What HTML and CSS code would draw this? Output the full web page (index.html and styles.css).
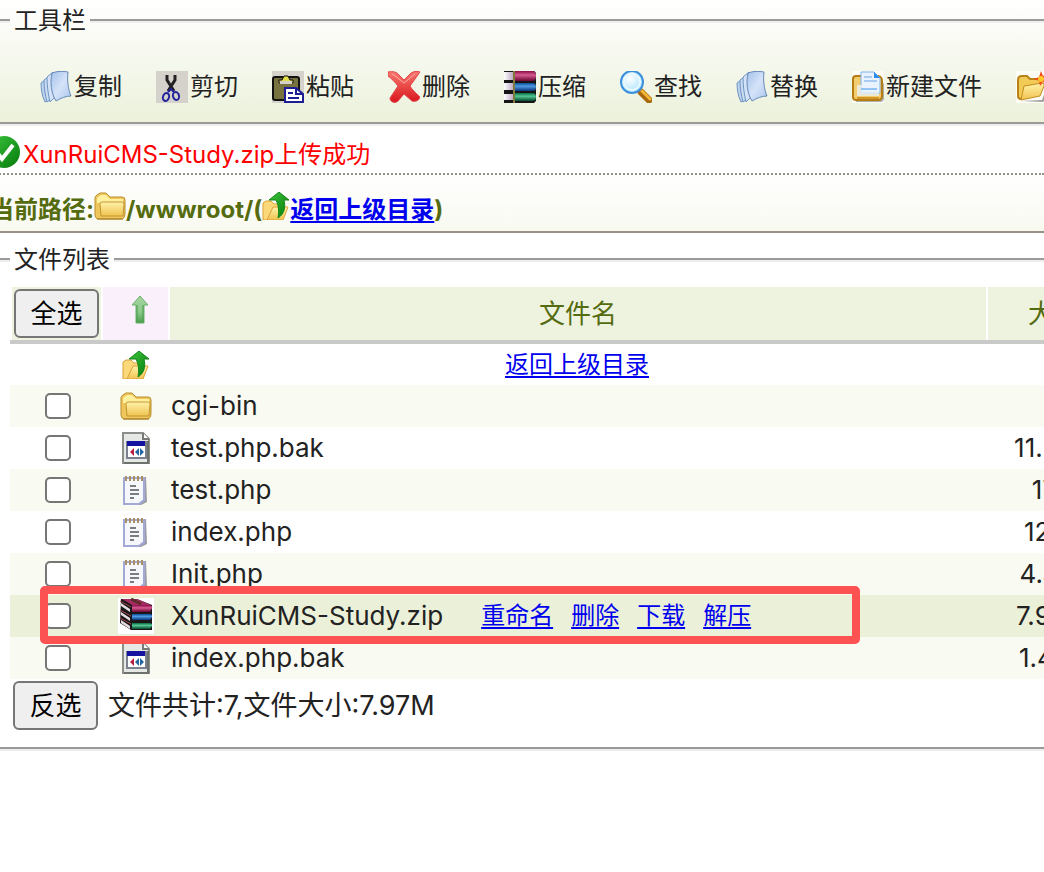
FILE: index.html
```
<!DOCTYPE html>
<html lang="zh-CN">
<head>
    <meta charset="utf-8">
    <title>文件管理</title>
    <link rel="stylesheet" href="styles.css">
</head>
<body>
    <svg class="defs" width="0" height="0" aria-hidden="true">
        <defs>
            <linearGradient id="blue" x1="0" y1="0" x2="1" y2="1">
                <stop offset="0" stop-color="#a4c2ea"/>
                <stop offset=".5" stop-color="#d5e3f9"/>
                <stop offset="1" stop-color="#a9c4ee"/>
            </linearGradient>
            <linearGradient id="gold" x1="0" y1="0" x2="0" y2="1">
                <stop offset="0" stop-color="#fff3a8"/>
                <stop offset="1" stop-color="#f0c351"/>
            </linearGradient>
            <linearGradient id="red" x1="0" y1="0" x2="0" y2="1">
                <stop offset="0" stop-color="#f87a70"/>
                <stop offset="1" stop-color="#d9151c"/>
            </linearGradient>
            <linearGradient id="green" x1="0" y1="0" x2="1" y2="1">
                <stop offset="0" stop-color="#3cc53c"/>
                <stop offset="1" stop-color="#057a0c"/>
            </linearGradient>
            <linearGradient id="pale" x1="0" y1="0" x2="0" y2="1">
                <stop offset="0" stop-color="#a4d5a0"/>
                <stop offset=".6" stop-color="#8cc98a"/>
                <stop offset="1" stop-color="#4c9f4f"/>
            </linearGradient>
            <linearGradient id="page" x1="0" y1="0" x2="1" y2="0">
                <stop offset="0" stop-color="#fff"/>
                <stop offset="1" stop-color="#bda9c4"/>
            </linearGradient>
            <linearGradient id="bookRed" x1="0" y1="0" x2="0" y2="1">
                <stop offset="0" stop-color="#8a0a48"/>
                <stop offset=".4" stop-color="#d65a90"/>
                <stop offset="1" stop-color="#6c0332"/>
            </linearGradient>
            <linearGradient id="bookBlue" x1="0" y1="0" x2="0" y2="1">
                <stop offset="0" stop-color="#0c4c98"/>
                <stop offset=".4" stop-color="#4f9be2"/>
                <stop offset="1" stop-color="#08347a"/>
            </linearGradient>
            <linearGradient id="bookGreen" x1="0" y1="0" x2="0" y2="1">
                <stop offset="0" stop-color="#046b40"/>
                <stop offset=".4" stop-color="#55c795"/>
                <stop offset="1" stop-color="#034a2c"/>
            </linearGradient>
            <radialGradient id="lens" cx=".4" cy=".35" r=".7">
                <stop offset="0" stop-color="#fff"/>
                <stop offset="1" stop-color="#a5e1fb"/>
            </radialGradient>
        </defs>

        <symbol id="i-copy" viewBox="0 0 32 32">
            <path d="M1 12l7-5 2 22-5 2C2 25 1 18 1 12z" fill="#bdd2ee" stroke="#6f95c0"/>
            <path d="M4 9l7-5 1 23-5 4C5 24 4 16 4 9z" fill="#c9dbf3" stroke="#6f95c0"/>
            <path d="M7 6l6-5 2 25-5 5C8 23 7 14 7 6z" fill="#d3e2f6" stroke="#6f95c0"/>
            <path d="M12 2c5-2 11-2 16-1-1 8 0 17 3 24-5 0-10 2-15 5C11 22 10 11 12 2z" fill="url(#blue)" stroke="#6689b6"/>
        </symbol>

        <symbol id="i-cut" viewBox="0 0 32 32">
            <path d="M0 0h32v32H0z" fill="#d5d2cb"/>
            <path d="M11 4v5l7 11M19 4v5l-7 11" fill="none" stroke="#222" stroke-width="3"/>
            <ellipse cx="10" cy="26" rx="3" ry="4" transform="rotate(20 10 26)" fill="none" stroke="#22229a" stroke-width="2"/>
            <ellipse cx="20" cy="25" rx="3" ry="4" transform="rotate(-15 20 25)" fill="none" stroke="#22229a" stroke-width="2"/>
            <path d="M12 21l3-3 3 3" fill="none" stroke="#22229a" stroke-width="2"/>
        </symbol>

        <symbol id="i-paste" viewBox="0 0 32 32">
            <path d="M0 0h32v32H0z" fill="#d5d2cb"/>
            <rect x="1" y="6" width="26" height="23" rx="2" fill="#77723e" stroke="#111" stroke-width="2"/>
            <path d="M7 12V9h3l2-4h4l2 4h3v3z" fill="#e5df4d" stroke="#111"/>
            <path d="M8 10h12v3H8z" fill="#d5d2cb"/>
            <path d="M13 17h11l7 6v8H13z" fill="#fff" stroke="#1d1d96" stroke-width="2"/>
            <path d="M24 17v6h6M16 22h5M16 27h11" fill="none" stroke="#1d1d96" stroke-width="2"/>
        </symbol>

        <symbol id="i-delete" viewBox="0 0 32 32">
            <path d="M0 1c5-1 9 0 11 3l5 5 7-7c3-2 7-2 9-1L22 15c2 4 6 7 10 11-1 4-5 5-8 4l-8-7-6 7c-3 3-8 1-8-3l8-12C7 11 4 8 0 5z" fill="url(#red)" stroke="#e0464a"/>
            <path d="M4 3c4 2 8 6 12 9L27 3" fill="none" stroke="#ffaca5"/>
        </symbol>

        <symbol id="i-rar" viewBox="0 0 32 32">
            <path d="M0 0h30l2 2v28l-2 2H0z" fill="#151515"/>
            <path d="M0 1h9v8H0zM0 12h9v7H0zM0 23h9v6H0z" fill="url(#page)"/>
            <path d="M11 0h18q3 0 3 5t-3 5H11z" fill="url(#bookRed)"/>
            <path d="M11 12h18q3 0 3 4t-3 4H11z" fill="url(#bookBlue)"/>
            <path d="M11 22h18q3 0 3 4t-3 4H11z" fill="url(#bookGreen)"/>
            <path d="M10 0v32" stroke="#7d7a3c" stroke-width="2"/>
        </symbol>

        <symbol id="i-find" viewBox="0 0 32 32">
            <path d="M21 21l8 8" stroke="#a8680e" stroke-width="7" stroke-linecap="round"/>
            <path d="M22 20l8 8" stroke="#f3b73a" stroke-width="3" stroke-linecap="round"/>
            <circle cx="12" cy="11" r="11" fill="url(#lens)" stroke="#3d90dc" stroke-width="2"/>
            <circle cx="12" cy="11" r="8" fill="none" stroke="#e9f8ff" stroke-width="2"/>
        </symbol>

        <symbol id="i-newfile" viewBox="0 0 32 32">
            <path d="M0 0h32v32H0z" fill="#fdfcf6"/>
            <path d="M4 29h26V10l2 3v14q0 4-4 4H4z" fill="#777" opacity=".6"/>
            <path d="M1 8q0-3 3-3h22q4 1 4 5v15q0 4-4 4H4q-3 0-3-3z" fill="#f2cd70" stroke="#b57d12" stroke-width="2"/>
            <path d="M9 1h13l6 6v15H9z" fill="#e9f3ff" stroke="#7fb3ea"/>
            <path d="M22 1l6 6h-6z" fill="#2b8df0"/>
            <path d="M12 6h8M12 10h13" stroke="#a8cbf2" stroke-width="2"/>
            <path d="M5 14h22v11H5z" fill="#eaf3fa" opacity=".75"/>
            <path d="M9 18h16" stroke="#8fc4f3" stroke-width="2"/>
            <path d="M5 27h22" stroke="#d3962a" stroke-width="2"/>
        </symbol>

        <symbol id="i-newdir" viewBox="0 0 32 32">
            <path d="M0 0h32v32H0z" fill="#fdfcf6"/>
            <path d="M5 30l21-1 5-13v10l-4 5z" fill="#777" opacity=".7"/>
            <path d="M2 9q0-4 4-4h5l3 3h11v7L5 28q-3 0-3-3z" fill="#f1cb55" stroke="#b98317" stroke-width="2"/>
            <path d="M8 15l18-3q3 0 2 3l-4 10L5 29z" fill="url(#gold)" stroke="#c28c1d"/>
            <path d="M25 0l2 5 5-2-2 5 2 5-5-2-3 4-1-5-5-2 5-2z" fill="#f9491c"/>
            <circle cx="25" cy="8" r="3" fill="#ffcc2c"/>
        </symbol>

        <symbol id="i-ok" viewBox="0 0 32 32">
            <circle cx="16" cy="16" r="16" fill="url(#green)"/>
            <path d="M8 15l6 8L25 9" fill="none" stroke="#fff" stroke-width="4"/>
        </symbol>

        <symbol id="i-folder" viewBox="0 0 32 28">
            <path d="M1 6q0-2 2-3l3-2h6l4 4h12q3 0 3 3v14q0 4-3 5H4q-3-1-3-4z" fill="#eec65c" stroke="#b98d2c"/>
            <path d="M3 6l4-3h5l4 4h13v4H3z" fill="#fff0a0"/>
            <path d="M6 12q0-2 2-2h20q2 0 2 2l-1 12H7z" fill="url(#gold)" stroke="#c39633"/>
            <path d="M3 27h26" stroke="#a77a24"/>
        </symbol>

        <symbol id="i-up" viewBox="0 0 28 28">
            <path d="M1 28V11l3-2h5l3 3h5v16z" fill="#fbd97a" stroke="#dca037"/>
            <path d="M5 28l6-13h15l-5 13z" fill="url(#gold)" stroke="#dca037"/>
            <path d="M7 8l10-8 10 8h-5c2 8 0 14-6 18 1-6 1-12-2-18z" fill="url(#green)" stroke="#18851b"/>
        </symbol>

        <symbol id="i-sort" viewBox="0 0 18 30">
            <path d="M9 1l8 9h-4v18H5V10H1z" fill="url(#pale)" stroke="#69b26b" stroke-width="1"/>
            <path d="M6 10v17h6V10" fill="none" stroke="#4b9d50"/>
        </symbol>

        <symbol id="i-bak" viewBox="0 0 28 32">
            <path d="M1 1h20l6 6v24H1z" fill="#e5e8e5" stroke="#8b8e89" stroke-width="2"/>
            <path d="M21 1v6h6" fill="#fff" stroke="#777a75" stroke-width="2"/>
            <path d="M26 9v22H2" fill="none" stroke="#6d726c" stroke-width="2"/>
            <path d="M5 10h19v16H5z" fill="#fff" stroke="#7c8190" stroke-width="2"/>
            <path d="M5 9h18v5H5z" fill="#1514a0"/>
            <path d="M12 16v8l-4-4z" fill="#b81e43"/>
            <path d="M13 20l4-4v8zM18 16l4 4-4 4z" fill="#2464a0"/>
        </symbol>

        <symbol id="i-text" viewBox="0 0 28 32">
            <path d="M4 3h20l1 25-6 3-16-1z" fill="#9e9da5"/>
            <path d="M2 4h20v22l-5 4H2z" fill="#f6f7fb" stroke="#a2a9d6" stroke-width="2"/>
            <path d="M4 2v5M8 2v5M12 2v5M16 2v5M20 2v5" stroke="#aa9165" stroke-width="2"/>
            <path d="M8 12h6M8 16h9M8 20h9M8 24h4" stroke="#7b7d80" stroke-width="2"/>
        </symbol>

        <symbol id="i-zip" viewBox="0 0 36 36">
            <path d="M0 0h36v36H0z" fill="#fff"/>
            <path d="M3 1h16l15 6v25H13L2 25z" fill="#1b1718"/>
            <path d="M4 1h15l14 6H14z" fill="#a32c61"/>
            <path d="M13 1l10 5" stroke="#5e2c29" stroke-width="3"/>
            <path d="M14 7h18q3 1 2 3t-2 4H14z" fill="url(#bookRed)"/>
            <path d="M14 16h18q3 1 2 3t-2 3H14z" fill="url(#bookBlue)"/>
            <path d="M14 25h18q3 1 2 3t-2 3H14z" fill="url(#bookGreen)"/>
            <path d="M3 5l9 6v3L3 8zM3 14l9 6v3l-9-6zM3 22l9 6v3l-9-6z" fill="#e6dde3"/>
            <path d="M2 3l11 6M2 12l11 6M2 20l11 6" stroke="#a04a4c" stroke-width="1"/>
        </symbol>
    </svg>

    <header class="top">
        <fieldset>
            <legend>工具栏</legend>
            <nav class="toolbar">
                <a href="#"><svg><use href="#i-copy"/></svg>复制</a>
                <a href="#"><svg><use href="#i-cut"/></svg>剪切</a>
                <a href="#"><svg><use href="#i-paste"/></svg>粘贴</a>
                <a href="#"><svg><use href="#i-delete"/></svg>删除</a>
                <a href="#"><svg><use href="#i-rar"/></svg>压缩</a>
                <a href="#"><svg><use href="#i-find"/></svg>查找</a>
                <a href="#"><svg><use href="#i-copy"/></svg>替换</a>
                <a href="#"><svg><use href="#i-newfile"/></svg>新建文件</a>
                <a href="#" aria-label="新建目录"><svg><use href="#i-newdir"/></svg></a>
            </nav>
        </fieldset>
    </header>

    <div class="message">
        <svg><use href="#i-ok"/></svg>
        <span>XunRuiCMS-Study.zip上传成功</span>
    </div>

    <div class="path">
        <span>当前路径:</span>
        <svg class="folder"><use href="#i-folder"/></svg>
        <span>/wwwroot/(</span>
        <svg class="up"><use href="#i-up"/></svg>
        <a href="#">返回上级目录</a>
        <span>)</span>
    </div>

    <fieldset class="files">
        <legend>文件列表</legend>
        <table>
            <colgroup>
                <col class="col-check">
                <col class="col-icon">
                <col>
                <col class="col-size">
            </colgroup>
            <thead>
                <tr>
                    <th><button type="button" id="all">全选</button></th>
                    <th class="sort"><svg class="arrow"><use href="#i-sort"/></svg></th>
                    <th>文件名</th>
                    <th>大小</th>
                </tr>
            </thead>
            <tbody>
                <tr class="parent">
                    <td></td>
                    <td><svg class="up"><use href="#i-up"/></svg></td>
                    <td><a href="#">返回上级目录</a></td>
                    <td></td>
                </tr>
                <tr class="odd">
                    <td><input type="checkbox" aria-label="cgi-bin"></td>
                    <td><svg class="folder"><use href="#i-folder"/></svg></td>
                    <td class="name">cgi-bin</td>
                    <td></td>
                </tr>
                <tr>
                    <td><input type="checkbox" aria-label="test.php.bak"></td>
                    <td><svg class="doc"><use href="#i-bak"/></svg></td>
                    <td class="name">test.php.bak</td>
                    <td>11.25K</td>
                </tr>
                <tr class="odd">
                    <td><input type="checkbox" aria-label="test.php"></td>
                    <td><svg class="doc"><use href="#i-text"/></svg></td>
                    <td class="name">test.php</td>
                    <td>17B</td>
                </tr>
                <tr>
                    <td><input type="checkbox" aria-label="index.php"></td>
                    <td><svg class="doc"><use href="#i-text"/></svg></td>
                    <td class="name">index.php</td>
                    <td>127B</td>
                </tr>
                <tr class="odd">
                    <td><input type="checkbox" aria-label="Init.php"></td>
                    <td><svg class="doc"><use href="#i-text"/></svg></td>
                    <td class="name">Init.php</td>
                    <td>4.31K</td>
                </tr>
                <tr class="active">
                    <td class="mark-cell"><input type="checkbox" aria-label="XunRuiCMS-Study.zip"><div class="mark"></div></td>
                    <td><svg class="zip"><use href="#i-zip"/></svg></td>
                    <td class="name">
                        <div class="actions">
                            <span>XunRuiCMS-Study.zip</span>
                            <a href="#">重命名</a>
                            <a href="#">删除</a>
                            <a href="#">下载</a>
                            <a href="#">解压</a>
                        </div>
                    </td>
                    <td>7.95M</td>
                </tr>
                <tr class="odd">
                    <td><input type="checkbox" aria-label="index.php.bak"></td>
                    <td><svg class="doc"><use href="#i-bak"/></svg></td>
                    <td class="name">index.php.bak</td>
                    <td>1.45K</td>
                </tr>
            </tbody>
        </table>
        <div class="total">
            <button type="button" id="invert">反选</button>
            <span>文件共计:7,文件大小:7.97M</span>
        </div>
    </fieldset>

    <script>
        const boxes = document.querySelectorAll('tbody input');

        document.getElementById('all').onclick = function() {
            boxes.forEach(function(box) {
                box.checked = true;
            });
        };

        document.getElementById('invert').onclick = function() {
            boxes.forEach(function(box) {
                box.checked = !box.checked;
            });
        };
    </script>
</body>
</html>
```

FILE: styles.css
```
body {
    margin: 0;
    overflow-x: hidden;
    font-family: Inter, "Noto Sans CJK SC", sans-serif;
    font-size: 24px;
    line-height: 34px;
    color: #222;
    background-color: #fff;
}

.defs {
    position: absolute;
}

svg {
    display: block;
    flex: none;
    width: 32px;
    height: 32px;
}

a {
    color: #0000ee;
    text-underline-offset: 3px;
    text-decoration-thickness: 2px;
}

fieldset {
    margin: 0;
    min-width: 0;
    padding: 0 0 0 10px;
    border: 4px groove #eee;
    border-width: 4px 0;
}

legend {
    padding: 0 4px;
}

.top {
    padding-top: 4px;
    background: linear-gradient(#fff, #ebf1da);
}

.toolbar {
    display: flex;
    gap: 34px;
    padding: 33px 0 19px 30px;
    overflow: hidden;
}

.toolbar a {
    display: flex;
    align-items: center;
    flex: none;
    gap: 2px;
    height: 32px;
    color: #222;
    text-decoration: none;
}

.message {
    display: flex;
    align-items: center;
    gap: 3px;
    height: 49px;
    box-sizing: border-box;
    margin-left: -12px;
    padding-top: 10px;
    color: #f00;
    border-bottom: 2px dotted #949184;
}

.message svg {
    margin-bottom: 6px;
}

.path {
    display: flex;
    align-items: center;
    height: 58px;
    box-sizing: border-box;
    margin-left: -10px;
    padding-top: 14px;
    font-weight: bold;
    color: #556b0f;
    background: linear-gradient(#fff, #f8f9f0);
    border-bottom: 2px solid #989184;
}

.path svg {
    margin-bottom: 8px;
}

.folder {
    width: 32px;
    height: 28px;
}

.up {
    width: 28px;
    height: 28px;
}

.arrow {
    width: 18px;
    height: 30px;
}

.doc {
    width: 28px;
    height: 32px;
}

.zip {
    width: 36px;
    height: 36px;
}

.files {
    margin-top: 10px;
    padding-top: 10px;
    padding-bottom: 17px;
    overflow: hidden;
}

table {
    width: calc(100% + 76px);
    table-layout: fixed;
    border-spacing: 0;
    font-size: 26px;
}

.col-check {
    width: 91px;
}

.col-icon {
    width: 67px;
}

.col-size {
    width: 134px;
}

th {
    height: 53px;
    box-sizing: border-box;
    padding: 0;
    font-weight: normal;
    color: #556b0f;
    background-color: #eef3df;
    border-left: 2px solid #fff;
}

.sort {
    padding-left: 8px;
    padding-bottom: 8px;
    background-color: #faf0fb;
}

th svg, td svg {
    margin: 0 auto;
}

td {
    height: 42px;
    padding: 0;
    text-align: center;
}

td:nth-child(2) {
    padding-left: 2px;
}

.parent td {
    height: 41px;
    border-top: 4px solid #c9c9c9;
}

td a {
    font-size: 24px;
}

td.name {
    padding-left: 3px;
    text-align: left;
}

.odd {
    background-color: #f9faf1;
}

.active {
    background-color: #ebf0d9;
}

.actions {
    display: flex;
    gap: 18px;
}

.actions span {
    margin-right: 20px;
}

input[type="checkbox"] {
    appearance: none;
    display: block;
    width: 26px;
    height: 26px;
    margin: 0 0 0 35px;
    background-color: #fff;
    border: 2px solid #767676;
    border-radius: 5px;
}

input[type="checkbox"]:checked {
    background-color: #0075ff;
}

.mark-cell {
    position: relative;
}

.mark {
    position: absolute;
    top: -9px;
    left: 30px;
    z-index: 1;
    width: 820px;
    height: 58px;
    box-sizing: border-box;
    border: 8px solid #fc5252;
    border-radius: 5px;
    pointer-events: none;
}

button {
    width: 85px;
    height: 49px;
    padding: 0 0 4px;
    font-family: inherit;
    font-size: 26px;
    color: #000;
    background-color: #efefef;
    border: 2px solid #767676;
    border-radius: 6px;
}

th button {
    display: block;
    margin: 0 2px;
}

.total {
    display: flex;
    align-items: center;
    gap: 10px;
    padding: 2px 0 0 3px;
    font-size: 27px;
}
```
